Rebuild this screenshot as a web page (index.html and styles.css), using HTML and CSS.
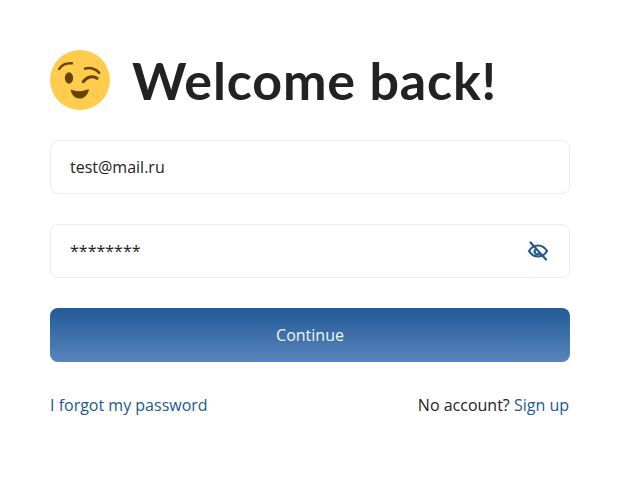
FILE: index.html
```html
<!DOCTYPE html>
<html lang="en">
<head>
<meta charset="utf-8">
<title>Welcome back!</title>
<link rel="stylesheet" href="styles.css">
</head>
<body>
<main class="card">
  <header class="head">
    <svg class="emoji" viewBox="0 0 36 36" aria-hidden="true">
      <circle cx="18" cy="18" r="18" fill="#FFCC4D"/>
      <ellipse cx="11.400" cy="16.800" rx="2.500" ry="3.400" fill="#664500"/>
      <path d="M5.600 11.300c1.400-2.300 4-3.500 7.500-3.300" fill="none" stroke="#664500" stroke-width="1.500" stroke-linecap="round"/>
      <path d="M21 11.200c3.400-1 6.800.2 8.500 2.500" fill="none" stroke="#664500" stroke-width="1.500" stroke-linecap="round"/>
      <path d="M20 19c2-3 5.800-3.800 8.200-2" fill="none" stroke="#664500" stroke-width="1.900" stroke-linecap="round"/>
      <path d="M12.500 24.300c-.1-.3.200-.6.500-.5 1.600.6 3.200.9 4.800.9 1.900 0 3.600-.4 5-1.100.3-.1.600.1.500.5-.7 2.900-2.900 5-5.500 5-2.700 0-4.800-2-5.300-4.800z" fill="#664500"/>
    </svg>
    <h1 class="title">Welcome back!</h1>
  </header>
  <form class="form">
    <div class="field"><span class="value">test@mail.ru</span></div>
    <div class="field"><span class="value">********</span>
      <svg class="eye" viewBox="0 0 24 24" aria-hidden="true">
        <path d="M3 12c2.200-3.600 5.200-5.500 9-5.500s6.800 1.900 9 5.500c-2.200 3.600-5.200 5.500-9 5.500S5.200 15.600 3 12z" fill="none" stroke="#22598f" stroke-width="2.200" stroke-linejoin="round"/>
        <path d="M9.300 10.500a3 3 0 0 0 4.200 4.200" fill="none" stroke="#22598f" stroke-width="2.200"/>
        <path d="M4.500 3.500l15.500 17" fill="none" stroke="#22598f" stroke-width="2.200" stroke-linecap="round"/>
      </svg>
    </div>
    <button class="submit" type="button">Continue</button>
  </form>
  <footer class="foot">
    <a class="link" href="#">I forgot my password</a>
    <span>No account? <a class="link" href="#">Sign up</a></span>
  </footer>
</main>
</body>
</html>
```
FILE: styles.css
```css
* { box-sizing: border-box; }
html, body { margin: 0; height: 100%; background: #fff; }
body { font-family: "Open Sans", "Noto Sans", sans-serif; font-size: 16px; color: #222; }
.card { width: 520px; margin: 0 auto; padding-top: 50px; }
.head { display: flex; align-items: center; gap: 22px; height: 60px; }
.emoji { width: 60px; height: 60px; flex: none; }
.title { margin: 0; font-family: "Lato", sans-serif; font-size: 52px; font-weight: 700; letter-spacing: .85px; line-height: 60px; color: #222; white-space: nowrap; }
.form { display: flex; flex-direction: column; gap: 30px; margin-top: 30px; }
.field { height: 54px; display: flex; align-items: center; justify-content: space-between; padding: 0 19px; border: 1px solid #ececec; border-radius: 8px; background: #fff; }
.value { line-height: 22px; }
.eye { width: 24px; height: 24px; flex: none; }
.submit { height: 54px; border: 0; border-radius: 8px; font: inherit; color: #f2f5f9; background: linear-gradient(180deg, #215b98, #5a84bb); }
.foot { display: flex; justify-content: space-between; margin-top: 31px; padding-right: 1px; line-height: 24px; }
.link { color: #22598f; text-decoration: none; }
```
